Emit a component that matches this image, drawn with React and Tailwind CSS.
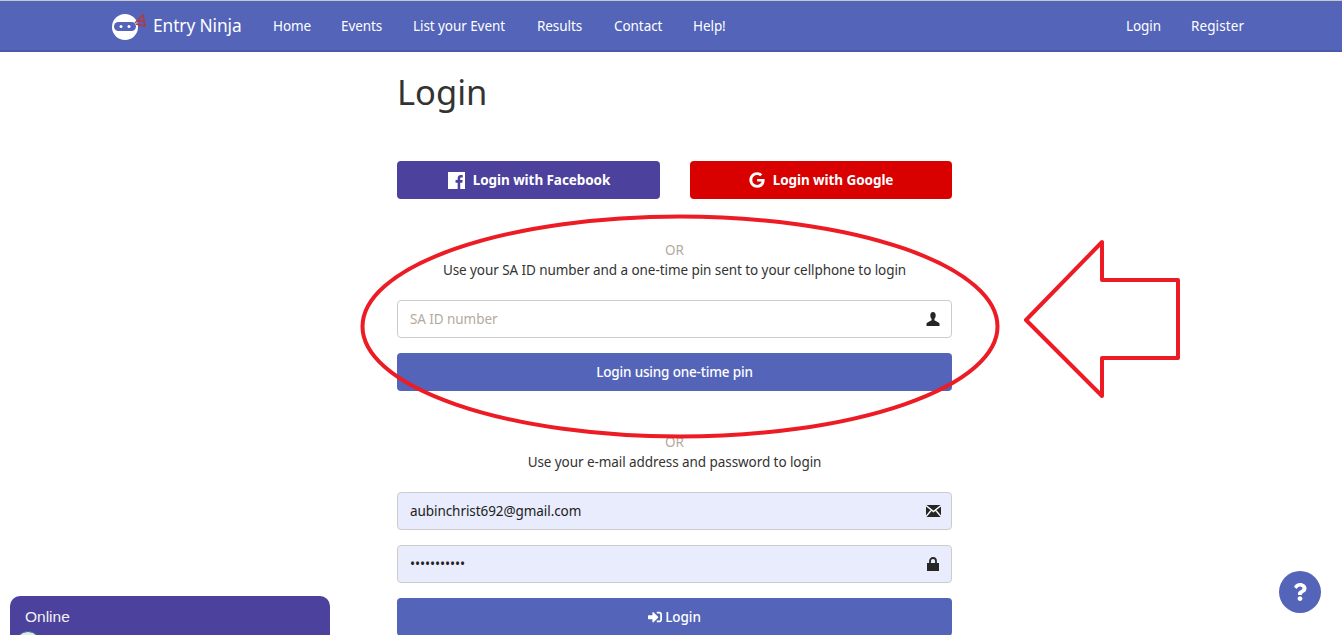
import React from 'react';
import { FaGoogle, FaSignInAlt, FaQuestion } from 'react-icons/fa';

function NinjaLogo() {
  return (
    <svg width="34" height="28" viewBox="0 0 34 28" className="shrink-0">
      <circle cx="13" cy="15" r="13" fill="#fff" />
      <rect x="2" y="10" width="22" height="9" rx="4.500" fill="#5364b9" />
      <circle cx="9" cy="14.500" r="1.500" fill="#fff" />
      <circle cx="17" cy="14.500" r="1.500" fill="#fff" />
      <path d="M23 11 L31 3 L33 14 L24 12 M26 9 L32 9" fill="none" stroke="#b5383c" strokeWidth="1.500" />
    </svg>
  );
}

function UserIcon() {
  return (
    <svg width="14" height="14" viewBox="0 0 14 14">
      <path d="M7 0C5.200 0 4.300 1.300 4.300 3.200c0 1.500.6 3 1.300 3.800v1.200C4 9.200 1.500 10 .5 11.500V14h13v-2.500C12.500 10 10 9.200 8.400 8.200V7c.7-.8 1.300-2.300 1.300-3.800C9.700 1.300 8.800 0 7 0Z" fill="#262626" />
    </svg>
  );
}

function MailIcon() {
  return (
    <svg width="15" height="12" viewBox="0 0 15 12" className="-mr-px">
      <rect width="15" height="12" fill="#262626" />
      <path d="M0 0.500 L7.500 6.500 L15 0.500 M0 11.500 L5.500 5 M15 11.500 L9.500 5" fill="none" stroke="#fff" strokeWidth="1.400" />
    </svg>
  );
}

function LockIcon() {
  return (
    <svg width="14" height="14" viewBox="0 0 14 14">
      <path d="M1 6h12v8H1Z" fill="#262626" />
      <path d="M4 6.500V4a3 3 0 0 1 6 0v2.500" fill="none" stroke="#262626" strokeWidth="1.800" />
    </svg>
  );
}

function FacebookIcon() {
  return (
    <svg width="17" height="17" viewBox="0 0 16 16">
      <path d="M0 0h16v16h-4.500V10h2l.3-2.400h-2.300V6.200c0-.7.2-1.100 1.200-1.100h1.200V3c-.3 0-1-.1-1.800-.1-1.800 0-3 1.100-3 3.100v1.600h-2V10h2v6H0Z" fill="#fff" />
    </svg>
  );
}

function Field({ value, placeholder, filled, icon, className }) {
  return (
    <div className={`h-[38px] border border-[#cccccc] rounded-[4px] flex items-center justify-between pl-3 pr-[11px] ${filled ? 'bg-[#e9ecfc] text-[#212121]' : 'bg-white text-[#b3aaa0]'} ${className}`}>
      <span>{value || placeholder}</span>
      {icon}
    </div>
  );
}

export default function App() {
  return (
    <div className="relative h-[635px] overflow-hidden bg-white font-['Noto_Sans',sans-serif] text-[13.5px] tracking-[-0.07px] text-[#333333]">
      {/* Navbar */}
      <nav className="h-[52px] bg-[#5364b9] border-t border-t-[#c8c8c8] border-b-2 border-b-[#4a5aa8] flex items-center pl-[112px] pr-[97px] text-white whitespace-nowrap">
        <div className="flex items-center w-[161px]">
          <NinjaLogo />
          <span className="text-[17.300px] ml-[7px]">Entry Ninja</span>
        </div>
        <div className="flex translate-y-px">
          <a className="w-[68px]">Home</a>
          <a className="w-[72px]">Events</a>
          <a className="w-[124px]">List your Event</a>
          <a className="w-[77px]">Results</a>
          <a className="w-[79px]">Contact</a>
          <a>Help!</a>
        </div>
        <div className="ml-auto flex translate-y-px">
          <a className="w-[65px]">Login</a>
          <a className="w-[54px] tracking-[0.1px]">Register</a>
        </div>
      </nav>

      {/* Login form */}
      <main className="ml-[397px] w-[555px]">
        <h1 className="text-[34.500px] leading-[40px] h-[109px] pt-[20px] tracking-normal text-[#333333]">Login</h1>

        <div className="flex justify-between">
          <button className="w-[263px] h-[38px] rounded-[4px] bg-[#4c419c] text-white font-bold flex items-center justify-center gap-[7px]">
            <FacebookIcon /> <span className="translate-x-px">Login with Facebook</span>
          </button>
          <button className="w-[262px] h-[38px] rounded-[4px] bg-[#d90000] text-white font-bold flex items-center justify-center gap-[8px]">
            <FaGoogle size={16} /> Login with Google
          </button>
        </div>

        <p className="mt-[41px] text-center leading-[20px] text-[#b3aaa0]">OR</p>
        <p className="text-center leading-[20px]">Use your SA ID number and a one-time pin sent to your cellphone to login</p>
        <Field className="mt-[20px]" placeholder="SA ID number" icon={<UserIcon />} />
        <button className="mt-[15px] w-full h-[38px] rounded-[4px] bg-[#5364b9] text-white font-medium tracking-[-0.17px]">Login using one-time pin</button>

        <p className="mt-[41px] text-center leading-[20px] text-[#b3aaa0]">OR</p>
        <p className="text-center leading-[20px]">Use your e-mail address and password to login</p>
        <Field className="mt-[20px]" filled value="aubinchrist692@gmail.com" icon={<MailIcon />} />
        <Field className="mt-[15px]" filled value="•••••••••••" icon={<LockIcon />} />
        <button className="mt-[15px] w-full h-[38px] rounded-[4px] bg-[#5364b9] text-white font-medium flex items-center justify-center gap-[3px]">
          <FaSignInAlt size={14} /> Login
        </button>
      </main>

      {/* Hand drawn annotation */}
      <svg className="absolute left-0 top-0 pointer-events-none" width="1342" height="635" fill="none" stroke="#ed1c24" strokeWidth="4">
        <ellipse cx="680" cy="326.500" rx="317.500" ry="110" />
        <path d="M1026 320 L1102 242 V280 H1178 V358 H1102 V396 Z" strokeLinejoin="round" />
      </svg>

      {/* Chat widget */}
      <div className="absolute left-[10px] top-[596px] w-[320px] h-[50px] rounded-t-[10px] bg-[#4c419c] text-[#f2f2f2] font-['Liberation_Sans',sans-serif] text-[15.500px] tracking-normal pl-[15px] pt-[11px] leading-[20px]">
        Online
        <div className="absolute left-[5px] top-[35px] w-[26px] h-[26px] rounded-full bg-[#e4e9ea] border border-[#2d6f8f]" />
      </div>

      {/* Help button */}
      <button className="absolute left-[1279px] top-[571px] w-[42px] h-[42px] rounded-full bg-[#5364b9] text-white flex items-center justify-center">
        <FaQuestion size={18} />
      </button>
    </div>
  );
}
